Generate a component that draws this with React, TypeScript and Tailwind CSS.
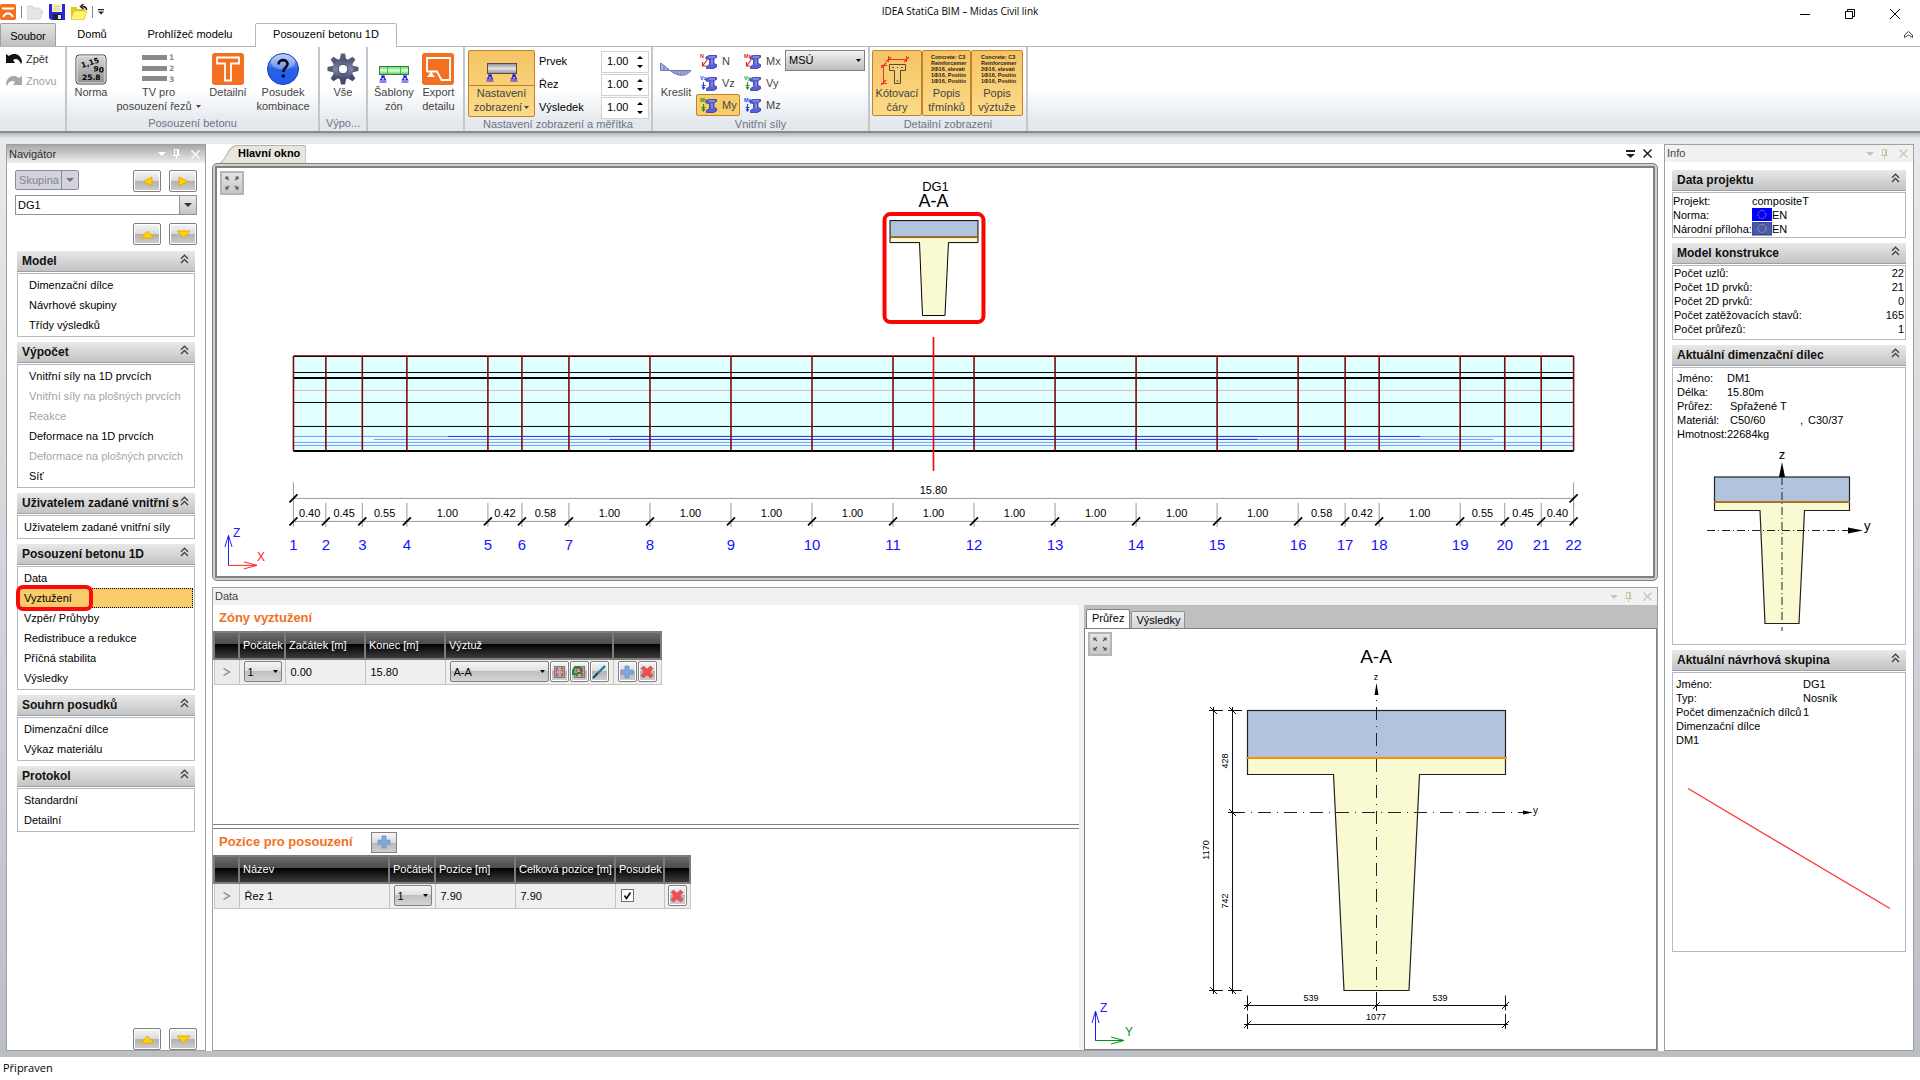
import React from "react";

const NODES = [0, 0.4, 0.85, 1.4, 2.4, 2.82, 3.4, 4.4, 5.4, 6.4, 7.4, 8.4, 9.4, 10.4, 11.4, 12.4, 12.98, 13.4, 14.4, 14.95, 15.4, 15.8];
const nodeX = (m: number) => 292.5 + m * 81.08;

const FONT = "font-['Liberation_Sans',Arial,sans-serif]";

/* ---------- small icons ---------- */

const Caret = ({ className = "" }: { className?: string }) => (
  <svg viewBox="0 0 5 3" className={"inline-block w-[5px] h-[3px] " + className}>
    <path d="M0 0h5L2.5 3z" fill="currentColor" />
  </svg>
);

const Chevrons = () => (
  <svg viewBox="0 0 9 10" className="h-[10px] w-[9px]" fill="none" stroke="#444" strokeWidth="1.4">
    <path d="M1 4.7L4.5 1.2L8 4.7M1 9L4.5 5.5L8 9" />
  </svg>
);

const PanelTools = ({ color }: { color: string }) => (
  <div className="flex items-center gap-[7px]" style={{ color }}>
    <button aria-label="Nabídka">
      <svg viewBox="0 0 8 4" className="block h-1 w-2"><path d="M0 0h8L4 4z" fill="currentColor" /></svg>
    </button>
    <button aria-label="Připnout">
      <svg viewBox="0 0 7 10" className="block h-[10px] w-[7px]" fill="none" stroke="currentColor">
        <path d="M1.5 6V.5h4V6M4.5 1v5M0 6.5h7M3.5 7v3" />
      </svg>
    </button>
    <button aria-label="Zavřít" className="pl-1">
      <svg viewBox="0 0 9 9" className="block h-[9px] w-[9px]" stroke="currentColor" strokeWidth="1.2"><path d="M.5.5l8 8M8.500.5l-8 8" /></svg>
    </button>
  </div>
);

const Support = ({ x, y }: { x: number; y: number }) => (
  <g stroke="#1414e6" fill="none">
    <path d={`M${x - 2} ${y}h4M${x} ${y}l-2.5 4h5zM${x - 3.5} ${y + 6}h7`} strokeWidth="1.2" />
  </g>
);

const NormaIcon = () => (
  <svg viewBox="0 0 32 32" className="h-8 w-8">
    <defs><linearGradient id="nrm" x2="0" y2="1"><stop stopColor="#d8d8d8" /><stop offset="1" stopColor="#8e8e8e" /></linearGradient></defs>
    <rect x="1" y="2" width="30" height="29" rx="3" fill="url(#nrm)" stroke="#3c3c3c" />
    <rect x="2" y="3" width="28" height="27" rx="2" fill="none" stroke="#e8e8e8" />
    <g fontFamily="DejaVu Sans" fontWeight="bold" fontSize="7.500">
      <text x="7" y="15" transform="rotate(-18 7 15)">1,15</text>
      <text x="18" y="18" transform="rotate(10 18 18)">90</text>
      <text x="7" y="27">25.8</text>
    </g>
  </svg>
);

const RowsIcon = () => (
  <svg viewBox="0 0 33 32" className="h-8 w-[33px]">
    <path d="M0 2h25v5H0zM0 13h25v5H0zM0 23h25v5H0z" fill="#8a8a8a" />
    <g fontFamily="DejaVu Sans" fontWeight="bold" fontSize="7.500" fill="#8a8a8a">
      <text x="27" y="7">1</text><text x="27" y="18">2</text><text x="27" y="29">3</text>
    </g>
  </svg>
);

const DetailIcon = () => (
  <svg viewBox="0 0 32 32" className="h-8 w-8">
    <rect width="32" height="32" rx="3" fill="#f37021" />
    <path d="M5 4.500h22v6h-8v17h-6v-17H5z" fill="none" stroke="#fff" strokeWidth="1.800" />
  </svg>
);

const HelpIcon = () => (
  <svg viewBox="0 0 32 32" className="h-8 w-8">
    <defs><linearGradient id="hlp" x2="0" y2="1"><stop stopColor="#a9c8f7" /><stop offset=".5" stopColor="#2a62e2" /><stop offset="1" stopColor="#1c5cf0" /></linearGradient></defs>
    <circle cx="16" cy="16" r="15.500" fill="url(#hlp)" stroke="#1c3fae" />
    <ellipse cx="16" cy="9" rx="12" ry="7.500" fill="#fff" opacity=".3" />
    <path d="M11.500 11.500c0-6 9-5.500 9-.5 0 3.500-4.200 3.500-4.200 8" fill="none" stroke="#0a0a20" strokeWidth="2.600" />
    <circle cx="16.300" cy="23" r="1.800" fill="#0a0a20" />
  </svg>
);

const GearIcon = () => (
  <svg viewBox="0 0 32 32" className="h-8 w-8">
    <defs><linearGradient id="ger" x2="0" y2="1"><stop stopColor="#4a5068" /><stop offset=".5" stopColor="#7b86ac" /><stop offset="1" stopColor="#3e4660" /></linearGradient></defs>
    <g>
      {[0, 45, 90, 135, 180, 225, 270, 315].map((a) => (
        <path key={a} d="M12.500 7.500l1.500-7h4l1.500 7z" transform={`rotate(${a} 16 16)`} fill={a > 90 && a < 270 ? "#454d69" : "#545c78"} />
      ))}
      <circle cx="16" cy="16" r="10.500" fill="url(#ger)" />
    </g>
    <circle cx="16" cy="16" r="4.800" fill="#fff" stroke="#3a4058" />
  </svg>
);

const ZonesIcon = () => (
  <svg viewBox="0 0 32 32" className="h-8 w-8">
    <defs><linearGradient id="zon" x2="0" y2="1"><stop stopColor="#56e056" /><stop offset=".5" stopColor="#d8ffd8" /><stop offset="1" stopColor="#44d044" /></linearGradient></defs>
    <rect x="1.500" y="13.500" width="29" height="8" fill="url(#zon)" stroke="#4c6a4c" />
    <path d="M9.500 14v7M22.500 14v7" stroke="#3cb83c" />
    <Support x={5} y={23} /><Support x={27} y={23} />
  </svg>
);

const ExportIcon = () => (
  <svg viewBox="0 0 32 32" className="h-8 w-8">
    <rect width="32" height="32" rx="3" fill="#f37021" />
    <path d="M5 19V5h23v22h-8.500L15 18.500H5" fill="none" stroke="#fff" strokeWidth="1.800" />
    <path d="M5 24l4-5.500 4 5.500z" fill="#fff" />
  </svg>
);

const BeamIcon = () => (
  <svg viewBox="0 0 32 32" className="h-8 w-8">
    <defs><linearGradient id="bmi" x2="0" y2="1"><stop stopColor="#8c8c8c" /><stop offset=".5" stopColor="#e6e6e6" /><stop offset="1" stopColor="#909090" /></linearGradient></defs>
    <rect x="1.500" y="10.500" width="29" height="10" fill="url(#bmi)" stroke="#505050" />
    <Support x={4} y={22} /><Support x={28} y={22} />
  </svg>
);

const DrawIcon = () => (
  <svg viewBox="0 0 32 32" className="h-8 w-8">
    <path d="M.5 10v7.500H31c-3 4-7 5.500-12 4.500C11 20.500 7 14 .5 10z" fill="#a9b3de" stroke="#6a76b4" />
    <path d="M4 12v5M8 15v3M12 17v2M15 17v4M18 17v5M21 17v5M24 17v4M27 17v3" stroke="#6a76b4" />
  </svg>
);

const ForceIcon = ({ tag, color, straight }: { tag: string; color: string; straight?: boolean }) => (
  <svg viewBox="0 0 18 16" className="h-4 w-[18px]">
    <path d="M6 4l3-1.500h7.500v2l-2.500 1v5l2.500 1v2.500l-3 1.500H6.500v-2l3-2V6.500L6 6z" fill="#5a60d0" stroke="#3038a4" strokeWidth=".8" />
    <path d="M9 4h6M12 6.500v5" stroke="#a8aef0" strokeWidth="1" />
    <text x="0" y="4.500" fontFamily="Liberation Sans" fontWeight="bold" fontSize="5.500" fill={color}>{tag}</text>
    <path d={straight ? "M3.500 7v7M1.500 10.500h4M2 12l1.500 2L5 12" : "M7 7l-4.500 6M2.500 9v4H6"} stroke={color} fill="none" strokeWidth="1.200" />
  </svg>
);

const DimIcon = () => (
  <svg viewBox="0 0 32 32" className="h-8 w-8">
    <path d="M7.500 5.500h18M2.500 11v19M7.500 2v6M25.500 2v6M0 11.500h6M0 29.500h6" stroke="#f03020" fill="none" />
    <path d="M5 8l5-5M23 8l5-5M0 14l5-5M0 31l5-5" stroke="#f03020" strokeWidth="1.300" />
    <path d="M8.500 10.500h16v6h-5v13h-6v-13h-5z" fill="#f2cf86" stroke="#604818" />
    <path d="M11 13.500h2M16 13.500h1M20 13.500h2M15.500 27h2" stroke="#604818" />
  </svg>
);

const TextIcon = () => (
  <svg viewBox="0 0 40 32" className="h-8 w-10">
    <g fontFamily="Liberation Sans" fontWeight="bold" fontSize="5.500" fill="#2a2210">
      <text x="4" y="5">Concrete: C3</text><text x="4" y="11">Reinforcemer</text><text x="4" y="17">2Φ16, elevati</text>
      <text x="4" y="23">1Φ16, Positio</text><text x="4" y="29">1Φ16, Positio</text>
    </g>
  </svg>
);

const PlusIcon = () => (
  <svg viewBox="0 0 14 14" className="h-[14px] w-[14px]"><path d="M5 1h4v4h4v4H9v4H5V9H1V5h4z" fill="#7fa8dc" stroke="#5d88c0" strokeWidth=".6" /></svg>
);
const CrossIcon = () => (
  <svg viewBox="0 0 14 14" className="h-[14px] w-[14px]"><path d="M3.500 1L7 4.300 10.500 1 13 3.500 9.700 7l3.300 3.500-2.500 2.500L7 9.700 3.500 13 1 10.500 4.300 7 1 3.500z" fill="#f25050" stroke="#d03030" strokeWidth=".6" /></svg>
);
const RebarIcon = ({ green }: { green?: boolean }) => (
  <svg viewBox="0 0 14 14" className="h-[14px] w-[14px]">
    <rect x="2.500" y="1.500" width="10" height="11" fill="#b4a8a8" stroke="#7a7a7a" />
    <path d="M4 3.500h2M9 3.500h2M4 10.500h2M9 10.500h2M4.500 5v1.500M10.500 5v1.500M4.500 8v1.500M10.500 8v1.500" stroke="#f02828" strokeWidth="1.500" />
    {green && <path d="M1 6c1-5 7-5 8-1v3H5M1 5v4h4" fill="none" stroke="#208830" strokeWidth="2" />}
  </svg>
);
const PencilIcon = () => (
  <svg viewBox="0 0 14 14" className="h-[14px] w-[14px]"><path d="M13 1L5 9" stroke="#2878b0" strokeWidth="2.400" /><path d="M5.500 8.500L1 13" stroke="#183850" strokeWidth="1.800" /></svg>
);

const FitButton = () => (
  <button aria-label="Zobrazit vše" className="absolute left-[3px] top-[3px] flex h-6 w-6 items-center justify-center border-2 border-[#b4b4b4] bg-gradient-to-b from-[#e4e4e4] to-[#c8c8c8]">
    <svg viewBox="0 0 16 16" className="h-4 w-4" stroke="#555" strokeWidth="1.200" fill="none">
      <path d="M5 5L2 2M2 4.500V2h2.500M11 5l3-3M11.500 2H14v2.500M5 11l-3 3M2 11.500V14h2.500M11 11l3 3M14 11.500V14h-2.500" />
    </svg>
  </button>
);

/* ---------- ribbon ---------- */

const Group = ({ label, className, children }: { label?: string; className: string; children: React.ReactNode }) => (
  <div className={"flex flex-none flex-col border-r-2 border-[#c3c7cc] pt-[3px] " + className}>
    <div className="flex h-[66px] items-start">{children}</div>
    <div className="h-4 text-center leading-4 whitespace-nowrap text-[#6b7486]">{label}</div>
  </div>
);

const Big = ({ icon, lines, className, caret }: { icon: React.ReactNode; lines: string[]; className: string; caret?: boolean }) => (
  <button className={"flex flex-col items-center pt-[3px] leading-[14px] text-[#444] " + className}>
    {icon}
    {lines.map((l, i) => (
      <span key={l} className="whitespace-nowrap">
        {l}{caret && i === lines.length - 1 && <Caret className="mb-0.5 ml-1" />}
      </span>
    ))}
  </button>
);

const Spin = ({ label }: { label: string }) => (
  <label className="flex h-[23px] items-center">
    <span className="w-[62px] text-black">{label}</span>
    <span className="flex h-[22px] w-[48px] items-center border border-[#cfd2d6] bg-white">
      <input defaultValue="1.00" className="w-[35px] pl-[5px] outline-none" />
      <svg viewBox="0 0 6 12" className="h-3 w-[6px]"><path d="M0 3h6L3 0zM0 9h6L3 12z" /></svg>
    </span>
  </label>
);

const Force = ({ tag, color, straight, active }: { tag: string; color: string; straight?: boolean; active?: boolean }) => (
  <button className={"flex h-[22px] w-[44px] items-center gap-1 rounded-xs border pl-[3px] text-[#444] " + (active ? "border-[#c2812a] bg-[#f8cb6b]" : "border-transparent")}>
    <ForceIcon tag={tag} color={color} straight={straight} />{tag}
  </button>
);

const Ribbon = () => (
  <div className="flex h-[87px] border-t border-b-2 border-t-[#b4b7bb] border-b-[#868b90] bg-[linear-gradient(#fff_0,#fff_50%,#e4e8ec_90%)]">
    <Group className="w-[67px]">
      <div className="flex flex-col pl-[6px]">
        <button className="flex h-[18px] items-center gap-1 text-[#333]">
          <svg viewBox="0 0 16 12" className="h-3 w-4"><path d="M0 1l3 2c5-4 12-2 13 6l-1 2c-2-5-5-6-8-4l2 3H0z" fill="#111" /></svg>Zpět
        </button>
        <button className="mt-1 flex h-[18px] items-center gap-1 text-[#a0a0a0]">
          <svg viewBox="0 0 16 12" className="h-3 w-4"><path d="M16 1l-3 2C8-1 1 1 0 9l1 2c2-5 5-6 8-4l-2 3h9z" fill="#a8a8a8" /></svg>Znovu
        </button>
      </div>
    </Group>
    <Group label="Posouzení betonu" className="w-[253px]">
      <Big className="ml-[3px] w-[42px]" icon={<NormaIcon />} lines={["Norma"]} />
      <Big className="w-[93px]" icon={<RowsIcon />} lines={["TV pro", "posouzení řezů"]} caret />
      <Big className="w-[46px]" icon={<DetailIcon />} lines={["Detailní"]} />
      <Big className="w-[64px]" icon={<HelpIcon />} lines={["Posudek", "kombinace"]} />
    </Group>
    <Group label="Výpo..." className="w-[48px]">
      <Big className="w-full" icon={<GearIcon />} lines={["Vše"]} />
    </Group>
    <Group className="w-[97px]">
      <Big className="ml-1.5 w-10" icon={<ZonesIcon />} lines={["Šablony", "zón"]} />
      <Big className="w-[50px]" icon={<ExportIcon />} lines={["Export", "detailu"]} />
    </Group>
    <Group label="Nastavení zobrazení a měřítka" className="w-[188px]">
      <button className="ml-[3px] flex w-[67px] flex-col items-center rounded-xs border border-[#c2812a] bg-gradient-to-b from-[#f5c465] to-[#fbdb88] leading-[14px] text-[#444]">
        <span className="flex w-full justify-center border-b border-[#c2812a] pt-[2px]"><BeamIcon /></span>
        <span>Nastavení</span>
        <span className="pb-0.5 whitespace-nowrap">zobrazení<Caret className="mb-0.5 ml-0.5" /></span>
      </button>
      <div className="ml-1"><Spin label="Prvek" /><Spin label="Řez" /><Spin label="Výsledek" /></div>
    </Group>
    <Group label="Vnitřní síly" className="w-[217px]">
      <Big className="ml-[3px] w-10" icon={<DrawIcon />} lines={["Kreslit"]} />
      <div className="mr-px grid grid-cols-2">
        <Force tag="N" color="#f02020" /><Force tag="Mx" color="#f02020" />
        <Force tag="Vz" color="#2040f0" straight /><Force tag="Vy" color="#20a020" straight />
        <Force tag="My" color="#209020" straight active /><Force tag="Mz" color="#2040f0" straight />
      </div>
      <label className="relative block">
        <select aria-label="Mezní stav" className="h-[21px] w-20 appearance-none border border-[#808080] bg-gradient-to-b from-[#f4f4f4] to-[#bdbdbd] pl-[3px] text-black">
          <option>MSÚ</option>
        </select>
        <Caret className="pointer-events-none absolute right-1 top-[9px]" />
      </label>
    </Group>
    <Group label="Detailní zobrazení" className="w-[158px]">
      <div className="flex pl-[2px] [&>button]:h-[66px] [&>button]:rounded-xs [&>button]:border [&>button]:border-[#c2812a] [&>button]:bg-gradient-to-b [&>button]:from-[#f5c465] [&>button]:to-[#fbdb88]">
        <Big className="w-[50px]" icon={<DimIcon />} lines={["Kótovací", "čáry"]} />
        <Big className="w-[49px]" icon={<TextIcon />} lines={["Popis", "třmínků"]} />
        <Big className="w-[52px]" icon={<TextIcon />} lines={["Popis", "výztuže"]} />
      </div>
    </Group>
  </div>
);

/* ---------- accordion sections ---------- */

const Section = ({ title, children }: { title: string; children: React.ReactNode }) => (
  <section className="mb-[5px]">
    <h3 className="mb-px flex h-[21px] items-center justify-between border-b border-[#9aa0a8] bg-gradient-to-b from-[#e8e8e8] to-[#c4c4c4] pl-[5px] pr-[6px] text-[12px] font-bold text-[#111]">
      <span className="whitespace-nowrap">{title}</span>
      <button aria-label={"Sbalit " + title} className="mb-[5px] block"><Chevrons /></button>
    </h3>
    <div className="border border-[#b4b9c0]">{children}</div>
  </section>
);

type Item = { t: string; off?: boolean; sel?: boolean };
const NavList = ({ items, indent }: { items: Item[]; indent?: boolean }) => (
  <ul className="p-px">
    {items.map((i) => (
      <li key={i.t} className="relative h-5">
        <a href="#" className={"block h-5 leading-5 whitespace-nowrap " + (indent ? "pl-[10px] " : "pl-[5px] ") + (i.off ? "text-[#a4a4a4] " : "text-black ") + (i.sel ? "border border-dotted border-black bg-[#f8cb6b] pl-1! leading-[18px]! " : "")}>{i.t}</a>
        {i.sel && <span className="pointer-events-none absolute -left-[3px] -top-[3px] h-[26px] w-[77px] rounded-[7px] border-4 border-[#fa0a0a]" />}
      </li>
    ))}
  </ul>
);

const ArrowButton = ({ dir, label }: { dir: "l" | "r" | "u" | "d"; label: string }) => {
  const d = { l: "M12 1v9L3 5.500z", r: "M3 1v9l9-4.500z", u: "M1 9h13L7.500 2z", d: "M1 2h13L7.500 9z" }[dir];
  return (
    <button aria-label={label} className="flex h-[22px] w-7 items-center justify-center rounded-xs border border-[#808080] bg-[linear-gradient(#f6f6f6_0,#dadada_50%,#b0b0b0_50%,#cfcfcf_100%)] shadow-[inset_0_0_0_1px_#fff]">
      <svg viewBox="0 0 15 11" className="h-[11px] w-[15px]"><path d={d} fill="#ffd400" stroke="#e0a000" strokeWidth=".8" /></svg>
    </button>
  );
};

const Navigator = () => (
  <aside className="flex w-[200px] flex-none flex-col border border-[#a0a0a0] bg-white">
    <header className="flex h-[18px] items-center justify-between bg-gradient-to-b from-[#a8a8a8] to-[#efefef] pl-[2px] pr-[5px] text-[#2c2c2c]">
      Navigátor<PanelTools color="#fff" />
    </header>
    <div className="flex flex-1 flex-col pl-[8px] pr-[8px] pt-[7px]">
      <div className="flex justify-end gap-2">
        <button disabled className="mr-auto flex h-5 w-16 items-center rounded-xs border border-[#8c8c94] bg-[#d2d3dc] text-[#85858c]">
          <span className="w-[46px] border-r border-[#8c8c94] pl-[1px] leading-[18px]">Skupina</span>
          <svg viewBox="0 0 8 4" className="ml-1 h-1 w-2"><path d="M0 0h8L4 4z" fill="#777" /></svg>
        </button>
        <ArrowButton dir="l" label="Předchozí" /><ArrowButton dir="r" label="Další" />
      </div>
      <div className="relative mt-[3px]">
        <select aria-label="Skupina" className="h-5 w-full appearance-none border border-[#8e949c] bg-white pl-[2px] text-black"><option>DG1</option></select>
        <span className="pointer-events-none absolute right-px top-px flex h-[18px] w-[17px] items-center justify-center border-l border-[#8e949c] bg-gradient-to-b from-[#ececec] to-[#c4c4c4]">
          <svg viewBox="0 0 8 4" className="h-1 w-2"><path d="M0 0h8L4 4z" fill="#333" /></svg>
        </span>
      </div>
      <div className="mt-2 mb-1.5 flex justify-end gap-2"><ArrowButton dir="u" label="Nahoru" /><ArrowButton dir="d" label="Dolů" /></div>
      <nav className="ml-[2px] mr-[2px] flex-1">
        <Section title="Model"><NavList indent items={[{ t: "Dimenzační dílce" }, { t: "Návrhové skupiny" }, { t: "Třídy výsledků" }]} /></Section>
        <Section title="Výpočet">
          <NavList indent items={[{ t: "Vnitřní síly na 1D prvcích" }, { t: "Vnitřní síly na plošných prvcích", off: true }, { t: "Reakce", off: true }, { t: "Deformace na 1D prvcích" }, { t: "Deformace na plošných prvcích", off: true }, { t: "Síť" }]} />
        </Section>
        <Section title="Uživatelem zadané vnitřní s"><NavList items={[{ t: "Uživatelem zadané vnitřní síly" }]} /></Section>
        <Section title="Posouzení betonu 1D">
          <NavList items={[{ t: "Data" }, { t: "Vyztužení", sel: true }, { t: "Vzpěr/ Průhyby" }, { t: "Redistribuce a redukce" }, { t: "Příčná stabilita" }, { t: "Výsledky" }]} />
        </Section>
        <Section title="Souhrn posudků"><NavList items={[{ t: "Dimenzační dílce" }, { t: "Výkaz materiálu" }]} /></Section>
        <Section title="Protokol"><NavList items={[{ t: "Standardní" }, { t: "Detailní" }]} /></Section>
      </nav>
      <div className="flex justify-end gap-2"><ArrowButton dir="u" label="Předchozí položka" /><ArrowButton dir="d" label="Další položka" /></div>
    </div>
  </aside>
);

/* ---------- main drawing ---------- */

const BeamView = () => {
  const x0 = nodeX(0), x1 = nodeX(15.8);
  return (
    <svg viewBox="216 168 1437 408" className="block min-h-0 w-full flex-1" fontFamily="Liberation Sans">
      <text x="935" y="191" fontSize="13" textAnchor="middle">DG1</text>
      <text x="933" y="207" fontSize="18" textAnchor="middle">A-A</text>
      <rect x="884" y="214" width="99" height="108" rx="6" fill="none" stroke="#fa0505" strokeWidth="4" />
      <path d="M889.500 237h88v5.500H948l-3.500 73h-22.500l-3-73h-29.500z" fill="#fafad2" stroke="#000" />
      <rect x="889.500" y="220.500" width="88" height="16.500" fill="#b0c4de" stroke="#000" />
      <path d="M889 237h89" stroke="#b87318" strokeWidth="1.500" />

      <rect x={x0} y="356" width={x1 - x0} height="95" fill="#e0ffff" />
      <path d={`M${x0} 390.500H${x1}`} stroke="#f0b4b4" />
      <path d={`M${x0} 436.500H${x1}M373 439.500H1493M${x0} 442.500H${x1}M${x0} 445.500H${x1}`} stroke="#8496ff" />
      <path d="M447 436.500H1420M609 439.500H1257" stroke="#3434f4" />
      <g stroke="#000">
        <path d={`M${x0} 372.500H${x1}M${x0} 402.500H${x1}M${x0} 426.500H${x1}`} />
        <path d={`M${x0} 378H${x1}`} strokeWidth="2" />
        <path d={`M${x0} 451H${x1}`} strokeWidth="2" />
      </g>
      <path d={`M${x0} 355.500H${x1}`} stroke="#b03030" /><path d={`M${x0} 356.500H${x1}`} stroke="#200000" />
      {NODES.map((m) => <path key={m} d={`M${nodeX(m)} 356V451`} stroke="#800808" strokeWidth="1.600" />)}
      <path d="M933 337V471" stroke="#f00" strokeWidth="1.600" />

      <g stroke="#999">
        <path d={`M${x0} 498.500H${x1}M${x0} 482.500V507M${x1} 482.500V507M${x0} 521.500H${x1}`} />
        {NODES.map((m) => <path key={m} d={`M${nodeX(m)} 503V527`} />)}
      </g>
      <g stroke="#000" strokeWidth="1.700">
        {NODES.map((m) => <path key={m} d={`M${nodeX(m) - 4} 525.500l8 -8`} />)}
        <path d={`M${x0 - 4} 502.500l8 -8M${x1 - 4} 502.500l8 -8`} />
      </g>
      <text x="933" y="494" fontSize="11" textAnchor="middle">15.80</text>
      {NODES.slice(1).map((m, i) => (
        <text key={m} x={(nodeX(m) + nodeX(NODES[i])) / 2} y="517" fontSize="11" textAnchor="middle">{(m - NODES[i]).toFixed(2)}</text>
      ))}
      {NODES.map((m, i) => <text key={m} x={nodeX(m)} y="550" fontSize="15" textAnchor="middle" fill="#1414ff">{i + 1}</text>)}

      <g fill="none">
        <path d="M227.500 565V536M224 547l3.500-11.500 3.500 11.500" stroke="#2020ff" />
        <path d="M227 565.500h29M243 562l13 3.500-13 3.500" stroke="#ff2020" />
      </g>
      <text x="232" y="537" fontSize="12" fill="#2020ff">Z</text>
      <text x="256" y="561" fontSize="12" fill="#ff2020">X</text>
    </svg>
  );
};

const MainView = () => (
  <section className="flex grow basis-[437px] flex-col">
    <div className="relative flex h-[19px] items-end justify-between pl-2">
      <button className="relative z-10 h-[18px] pl-[18px] pr-[6px] pb-0.5 text-[11px] font-bold">
        <svg viewBox="0 0 86 19" preserveAspectRatio="none" className="absolute inset-0 -z-10 h-full w-full"><path d="M0 19C6 17 8 1 16 .5H83Q85.500.5 85.500 3V19" fill="#e9e6df" stroke="#b8b4aa" /></svg>
        Hlavní okno
      </button>
      <div className="flex items-center gap-2 self-center pr-1.5">
        <button aria-label="Seznam oken"><svg viewBox="0 0 9 8" className="block h-2 w-[9px]"><path d="M0 0h9v2H0zM0 4h9L4.500 8z" fill="#222" /></svg></button>
        <button aria-label="Zavřít okno"><svg viewBox="0 0 9 9" className="block h-[9px] w-[9px]" stroke="#111" strokeWidth="1.400"><path d="M.5.500l8 8M8.500.5l-8 8" /></svg></button>
      </div>
    </div>
    <div className="flex flex-1 flex-col rounded-[5px] border border-[#808080] bg-[#d4d0c8] p-[2px]">
      <div className="relative flex flex-1 flex-col border-2 border-[#808080] bg-white"><BeamView /><FitButton /></div>
    </div>
  </section>
);

/* ---------- data panel ---------- */

const Th = ({ children }: { children?: React.ReactNode }) => (
  <th className="h-[27px] overflow-hidden border-2 border-[#7c7c7c] bg-[linear-gradient(#6a6a6a_0,#4a4a4a_45%,#000_45%,#3c3c3c_100%)] pl-[3px] text-left font-normal whitespace-nowrap text-white">{children}</th>
);
const Td = ({ children, className = "pl-[5px]" }: { children?: React.ReactNode; className?: string }) => (
  <td className={"h-[25px] border border-[#c4c4c4] bg-[#efefef] p-0 " + className}>{children}</td>
);
const Btn = ({ label, children }: { label: string; children: React.ReactNode }) => (
  <button aria-label={label} className="flex h-[21px] w-[19px] items-center justify-center rounded-xs border border-[#808080] bg-[linear-gradient(#f6f6f6_0,#dadada_50%,#b4b4b4_50%,#cfcfcf_100%)] shadow-[inset_0_0_0_1px_#fff]">{children}</button>
);
const Pick = ({ label, value, className }: { label: string; value: string; className: string }) => (
  <span className={"relative block " + className}>
    <select aria-label={label} className="h-[21px] w-full appearance-none rounded-xs border border-[#808080] bg-[linear-gradient(#f6f6f6_0,#dedede_50%,#c0c0c0_50%,#d4d4d4_100%)] pl-[3px]"><option>{value}</option></select>
    <Caret className="pointer-events-none absolute right-1 top-[9px]" />
  </span>
);
const RowMark = () => (
  <td className="border border-[#c4c4c4] bg-[#ebebeb] p-0">
    <svg viewBox="0 0 8 8" className="mx-auto h-2 w-2" fill="none" stroke="#888" strokeWidth="1.400"><path d="M.5.5l6 3.500-6 3.500" /></svg>
  </td>
);

const SectionView = () => (
  <svg viewBox="1085 628 571 420" className="block min-h-0 w-full flex-1" fontFamily="Liberation Sans">
    <text x="1376" y="662" fontSize="19" textAnchor="middle">A-A</text>
    <path d="M1247.500 757H1505.500v16.500H1419.500L1409 989.500H1344L1333.500 773.500H1247.500z" fill="#fafad2" stroke="#222" strokeWidth="1.200" />
    <rect x="1247.500" y="709.500" width="258" height="47.500" fill="#b0c4de" stroke="#222" strokeWidth="1.200" />
    <path d="M1246.500 757h260" stroke="#ff8c00" strokeWidth="2" />
    <path d="M1376.500 684V1010" stroke="#222" strokeDasharray="13 6 1 6" strokeDashoffset="4" />
    <path d="M1232 811.500H1524" stroke="#222" strokeDasharray="13 6 1 6" />
    <path d="M1376.500 682l2 12h-4zM1533 811.500l-10 2v-4z" />
    <text x="1376" y="679" fontSize="9" textAnchor="middle">z</text>
    <text x="1533" y="813" fontSize="10">y</text>
    <g stroke="#111">
      <path d="M1213.500 706V993M1232.500 706V993M1209 709.500h14M1228 709.500h14M1209 989.500h14M1228 989.500h14M1228 811.500h14" />
      <path d="M1210 706l7 7M1229 706l7 7M1210 986l7 7M1229 986l7 7M1229 808l7 7" />
      <path d="M1244 1004.500H1508M1244 1023.500H1508M1247.500 994.500v15M1376.500 991v19M1505.500 994.500v15M1247.500 1013v15M1505.500 1013v15" />
      <path d="M1244 1008l7-7M1373 1008l7-7M1502 1008l7-7M1244 1027l7-7M1502 1027l7-7" />
    </g>
    <g fontSize="9" textAnchor="middle">
      <text transform="translate(1209 849) rotate(-90)">1170</text>
      <text transform="translate(1228 760) rotate(-90)">428</text>
      <text transform="translate(1228 900) rotate(-90)">742</text>
      <text x="1311" y="1000">539</text><text x="1440" y="1000">539</text><text x="1376" y="1019">1077</text>
    </g>
    <g fill="none">
      <path d="M1095.500 1039V1010M1092 1022l3.500-12 3.500 12" stroke="#2020ff" />
      <path d="M1095 1039.500h29M1111 1036l13 3.500-13 3.500" stroke="#109010" />
    </g>
    <text x="1100" y="1011" fontSize="12" fill="#2020ff">Z</text>
    <text x="1125" y="1035" fontSize="12" fill="#109010">Y</text>
  </svg>
);

const DataPanel = () => (
  <section className="mt-1.5 flex grow basis-[464px] flex-col border border-[#a0a0a0] bg-white">
    <header className="flex h-[17px] items-center justify-between bg-[#f1f1f1] pl-[2px] pr-[5px] text-[#444]">Data<PanelTools color="#c9c6ab" /></header>
    <div className="flex flex-1">
      <div className="flex flex-1 flex-col">
        <div className="flex grow basis-[220px] flex-col items-start border-b border-[#808080]">
          <h2 className="h-[26px] pl-1.5 text-[13px] leading-[26px] font-bold text-[#f37021]">Zóny vyztužení</h2>
          <table className="w-[447px] table-fixed border-collapse border border-[#808080]">
            <colgroup><col className="w-[25px]" /><col className="w-[46px]" /><col className="w-[80px]" /><col className="w-[80px]" /><col className="w-[168px]" /><col className="w-[48px]" /></colgroup>
            <thead><tr><Th /><Th>Počátek</Th><Th>Začátek [m]</Th><Th>Konec [m]</Th><Th>Výztuž</Th><Th /></tr></thead>
            <tbody><tr>
              <RowMark />
              <Td className="pl-1"><Pick label="Počátek" value="1" className="w-[38px]" /></Td>
              <Td>0.00</Td><Td>15.80</Td>
              <Td className="pl-1">
                <div className="flex gap-px"><Pick label="Výztuž" value="A-A" className="w-[99px]" />
                  <Btn label="Upravit výztuž"><RebarIcon /></Btn><Btn label="Načíst výztuž"><RebarIcon green /></Btn><Btn label="Přejmenovat"><PencilIcon /></Btn></div>
              </Td>
              <Td className="pl-1"><div className="flex gap-px"><Btn label="Přidat zónu"><PlusIcon /></Btn><Btn label="Smazat zónu"><CrossIcon /></Btn></div></Td>
            </tr></tbody>
          </table>
        </div>
        <div className="mt-[3px] flex grow basis-[222px] flex-col items-start border-t border-[#808080]">
          <div className="flex h-[26px] items-center pl-1.5">
            <h2 className="w-[152px] text-[13px] font-bold text-[#f37021]">Pozice pro posouzení</h2>
            <button aria-label="Přidat pozici" className="flex h-[21px] w-[26px] items-center justify-center border border-[#808080] bg-[linear-gradient(#f6f6f6_0,#dadada_50%,#b4b4b4_50%,#cfcfcf_100%)]"><PlusIcon /></button>
          </div>
          <table className="w-[476px] table-fixed border-collapse border border-[#808080]">
            <colgroup><col className="w-[25px]" /><col className="w-[150px]" /><col className="w-[46px]" /><col className="w-[80px]" /><col className="w-[100px]" /><col className="w-[49px]" /><col className="w-[26px]" /></colgroup>
            <thead><tr><Th /><Th>Název</Th><Th>Počátek</Th><Th>Pozice [m]</Th><Th>Celková pozice [m]</Th><Th>Posudek</Th><Th /></tr></thead>
            <tbody><tr>
              <RowMark /><Td>Řez 1</Td>
              <Td className="pl-1"><Pick label="Počátek pozice" value="1" className="w-[38px]" /></Td>
              <Td>7.90</Td><Td>7.90</Td>
              <Td>
                <label className="relative block h-[13px] w-[13px]">
                  <input type="checkbox" defaultChecked aria-label="Posudek" className="peer block h-[13px] w-[13px] appearance-none border border-[#707070] bg-white" />
                  <svg viewBox="0 0 13 13" className="pointer-events-none absolute inset-0 hidden peer-checked:block" fill="none" stroke="#111" strokeWidth="1.600"><path d="M3.500 6.500l2 3 4-6" /></svg>
                </label>
              </Td>
              <Td className="pl-[3px]"><Btn label="Smazat pozici"><CrossIcon /></Btn></Td>
            </tr></tbody>
          </table>
        </div>
      </div>
      <div className="w-[5px] bg-[#f1f1f1]" />
      <div className="flex w-[573px] flex-none flex-col bg-[#bfbfbf]">
        <div className="flex h-[23px] items-end pl-[2px]">
          <button className="relative -mb-px h-5 rounded-t-xs border border-b-0 border-[#808080] bg-white px-[5px] pb-0.5 text-black">Průřez</button>
          <button className="ml-px h-[17px] rounded-t-xs border border-b-0 border-[#909090] bg-gradient-to-b from-[#ececec] to-[#d4d4d4] px-1 text-black">Výsledky</button>
        </div>
        <div className="relative flex flex-1 flex-col border border-[#808080] bg-white"><SectionView /><FitButton /></div>
      </div>
    </div>
  </section>
);

/* ---------- info panel ---------- */

const Flag = ({ dim }: { dim?: boolean }) => (
  <svg viewBox="0 0 20 14" className="h-[14px] w-5">
    <rect width="20" height="13" fill={dim ? "#4a58b0" : "#0000fa"} stroke={dim ? "#2c3880" : "none"} />
    <circle cx="10" cy="6.500" r="4" fill="none" stroke="#d8cc50" strokeDasharray="1 1.100" />
  </svg>
);

const Row = ({ k, v, kw }: { k: string; v: React.ReactNode; kw: string }) => (
  <div className="flex whitespace-nowrap"><dt className={"flex-none " + kw}>{k}</dt><dd className="flex">{v}</dd></div>
);

const InfoPanel = () => (
  <aside className="ml-1.5 flex w-[250px] flex-none flex-col border border-[#a0a0a0] bg-white">
    <header className="flex h-[17px] items-center justify-between bg-[#f1f1f1] pl-[2px] pr-[5px] text-[#444]">Info<PanelTools color="#c9c6ab" /></header>
    <div className="px-[7px] pt-2 leading-[14px] text-black">
      <Section title="Data projektu">
        <dl className="pt-px pb-px">
          <Row kw="w-[79px]" k="Projekt:" v="compositeT" />
          <Row kw="w-[79px]" k="Norma:" v={<><Flag />EN</>} />
          <Row kw="w-[79px]" k="Národní příloha:" v={<><Flag dim />EN</>} />
        </dl>
      </Section>
      <Section title="Model konstrukce">
        <dl className="px-px pb-[3px]">
          {[["Počet uzlů:", 22], ["Počet 1D prvků:", 21], ["Počet 2D prvků:", 0], ["Počet zatěžovacích stavů:", 165], ["Počet průřezů:", 1]].map(([k, v]) => (
            <div key={k} className="flex justify-between"><dt>{k}</dt><dd>{v}</dd></div>
          ))}
        </dl>
      </Section>
      <Section title="Aktuální dimenzační dílec">
        <dl className="pl-1 pt-[3px]">
          <Row kw="w-[50px]" k="Jméno:" v="DM1" />
          <Row kw="w-[50px]" k="Délka:" v="15.80m" />
          <Row kw="w-[53px]" k="Průřez:" v="Spřažené T" />
          <Row kw="w-[53px]" k="Materiál:" v={<><span className="w-[70px]">C50/60</span><span className="w-2">,</span><span>C30/37</span></>} />
          <Row kw="w-[50px]" k="Hmotnost:" v="22684kg" />
        </dl>
        <svg viewBox="1673 441 232 203" className="block w-full" fontFamily="Liberation Sans">
          <path d="M1714.500 502h135v8.500H1804.500L1799 623.500H1765L1760 510.500H1714.500z" fill="#fafad2" stroke="#222" strokeWidth="1.200" />
          <rect x="1714.500" y="477" width="135" height="25" fill="#b0c4de" stroke="#222" strokeWidth="1.200" />
          <path d="M1714 502h136" stroke="#d07810" strokeWidth="1.600" />
          <path d="M1782 477V631" stroke="#222" strokeDasharray="8 3 1 3" />
          <path d="M1707 530.500H1850" stroke="#222" strokeDasharray="8 3 1 3" />
          <path d="M1782 462l3 15h-6zM1863 530.500l-15 3v-6z" />
          <text x="1782" y="459" fontSize="13" textAnchor="middle">z</text>
          <text x="1864" y="530" fontSize="13">y</text>
        </svg>
      </Section>
      <Section title="Aktuální návrhová skupina">
        <dl className="h-[106px] pl-[3px] pt-1">
          <Row kw="w-[127px]" k="Jméno:" v="DG1" />
          <Row kw="w-[127px]" k="Typ:" v="Nosník" />
          <Row kw="w-[127px]" k="Počet dimenzačních dílců" v="1" />
          <div>Dimenzační dílce</div>
          <div>DM1</div>
        </dl>
        <svg viewBox="1673 779 232 172" className="block w-full"><path d="M1688 788.500L1890 908.500" stroke="#f33" strokeWidth="1.300" /></svg>
      </Section>
    </div>
  </aside>
);

/* ---------- window ---------- */

const TitleBar = () => (
  <div className="relative flex h-6 items-center justify-between">
    <div className="flex items-center">
      <svg viewBox="0 0 16 16" className="h-4 w-4"><rect width="16" height="16" rx="2" fill="#f37021" /><path d="M2 4.500h12M3 13c3-5 7-5 10 0" stroke="#fff" strokeWidth="2" fill="none" /></svg>
      <span className="mx-[5px] h-3 w-px bg-[#888]" />
      <button aria-label="Otevřít"><svg viewBox="0 0 16 15" className="block h-[15px] w-4"><path d="M0 14V1h6v2h7v3h3l-3 8z" fill="#e6e6e6" stroke="#d4d4d4" /></svg></button>
      <button aria-label="Uložit" className="ml-1.5"><svg viewBox="0 0 16 16" className="block h-4 w-4"><path d="M0 0h16v16H2l-2-2z" fill="#2828d8" /><path d="M3 0h10v8H3z" fill="#f4efc0" /><path d="M5 2.500h6M5 5h6" stroke="#d8ce80" /><path d="M4 10h9v6H4z" fill="#223" /><path d="M9 11h3v4H9z" fill="#dde" /></svg></button>
      <button aria-label="Zavřít projekt" className="ml-1.5"><svg viewBox="0 0 17 16" className="block h-4 w-[17px]"><path d="M0 15V3h6v2h8v10z" fill="#e8c820" /><path d="M0 15.500L3 7h13l-3 8.500z" fill="#fff470" stroke="#d8b820" strokeWidth=".6" /><path d="M15.500 6c0-3-2-3.500-4-3.500M12.500 0l-3 2.500 3 2.500" stroke="#111" fill="none" strokeWidth="1.400" /></svg></button>
      <span className="mx-1 h-3 w-px bg-[#888]" />
      <button aria-label="Přizpůsobit"><svg viewBox="0 0 8 6" className="block h-[6px] w-2"><path d="M1 0h6v1.200H1zM1 2.500h6L4 5.500z" fill="#222" /></svg></button>
    </div>
    <h1 className="pointer-events-none absolute inset-x-0 top-0 text-center font-['Open_Sans','Noto_Sans',sans-serif] text-[10px] leading-[22px] font-normal text-black">
      IDEA StatiCa BIM – Midas Civil link
    </h1>
    <div className="mt-1 mr-5 flex items-center gap-[35px]">
      <button aria-label="Minimalizovat"><svg viewBox="0 0 10 10" className="block h-[10px] w-[10px]"><path d="M0 5.500h10" stroke="#000" /></svg></button>
      <button aria-label="Obnovit"><svg viewBox="0 0 10 10" className="block h-[10px] w-[10px]" fill="none" stroke="#000"><path d="M.5 2.500h7v7h-7zM2.500 2V.5h7v7H8" /></svg></button>
      <button aria-label="Zavřít aplikaci"><svg viewBox="0 0 10 10" className="block h-[10px] w-[10px]" stroke="#000"><path d="M0 0l10 10M10 0L0 10" /></svg></button>
    </div>
  </div>
);

const Tabs = () => (
  <div className="flex h-[22px] items-end text-black">
    <button className="h-[23px] w-14 rounded-t-xs border border-b-0 border-[#a0a0a0] bg-gradient-to-b from-[#e4e4e4] to-[#c0c0c0] pt-[2px]">Soubor</button>
    <button className="h-[23px] w-[72px]">Domů</button>
    <button className="h-[23px] w-[124px]">Prohlížeč modelu</button>
    <button className="relative z-10 -mb-px ml-[3px] h-6 w-[142px] rounded-t-xs border border-b-0 border-[#b4b7bb] bg-white pb-0.5">Posouzení betonu 1D</button>
    <button aria-label="Sbalit pás karet" className="mr-[7px] mb-2 ml-auto">
      <svg viewBox="0 0 9 7" className="block h-[7px] w-[9px]" fill="none" stroke="#444"><path d="M.5 4L4.500.5 8.500 4v2.500L4.500 4l-4 2.500z" /></svg>
    </button>
  </div>
);

export default function App() {
  return (
    <div className={"flex min-h-screen flex-col bg-white text-[11px] " + FONT}>
      <TitleBar />
      <Tabs />
      <Ribbon />
      <div className="flex flex-1 flex-col bg-gradient-to-b from-[#e8eaed] to-[#bbbfc4] px-1.5 pb-1.5">
        <div className="-mx-1.5 h-[11px] bg-gradient-to-b from-[#b4b8bc] to-[#e8eaed] to-50%" />
        <div className="flex flex-1 bg-white">
          <Navigator />
          <main className="ml-1.5 flex min-w-0 flex-1 flex-col"><MainView /><DataPanel /></main>
          <InfoPanel />
        </div>
      </div>
      <footer className="h-[23px] bg-white pl-[3px] font-['Open_Sans','Noto_Sans',sans-serif] leading-[22px] text-black">Připraven</footer>
    </div>
  );
}
